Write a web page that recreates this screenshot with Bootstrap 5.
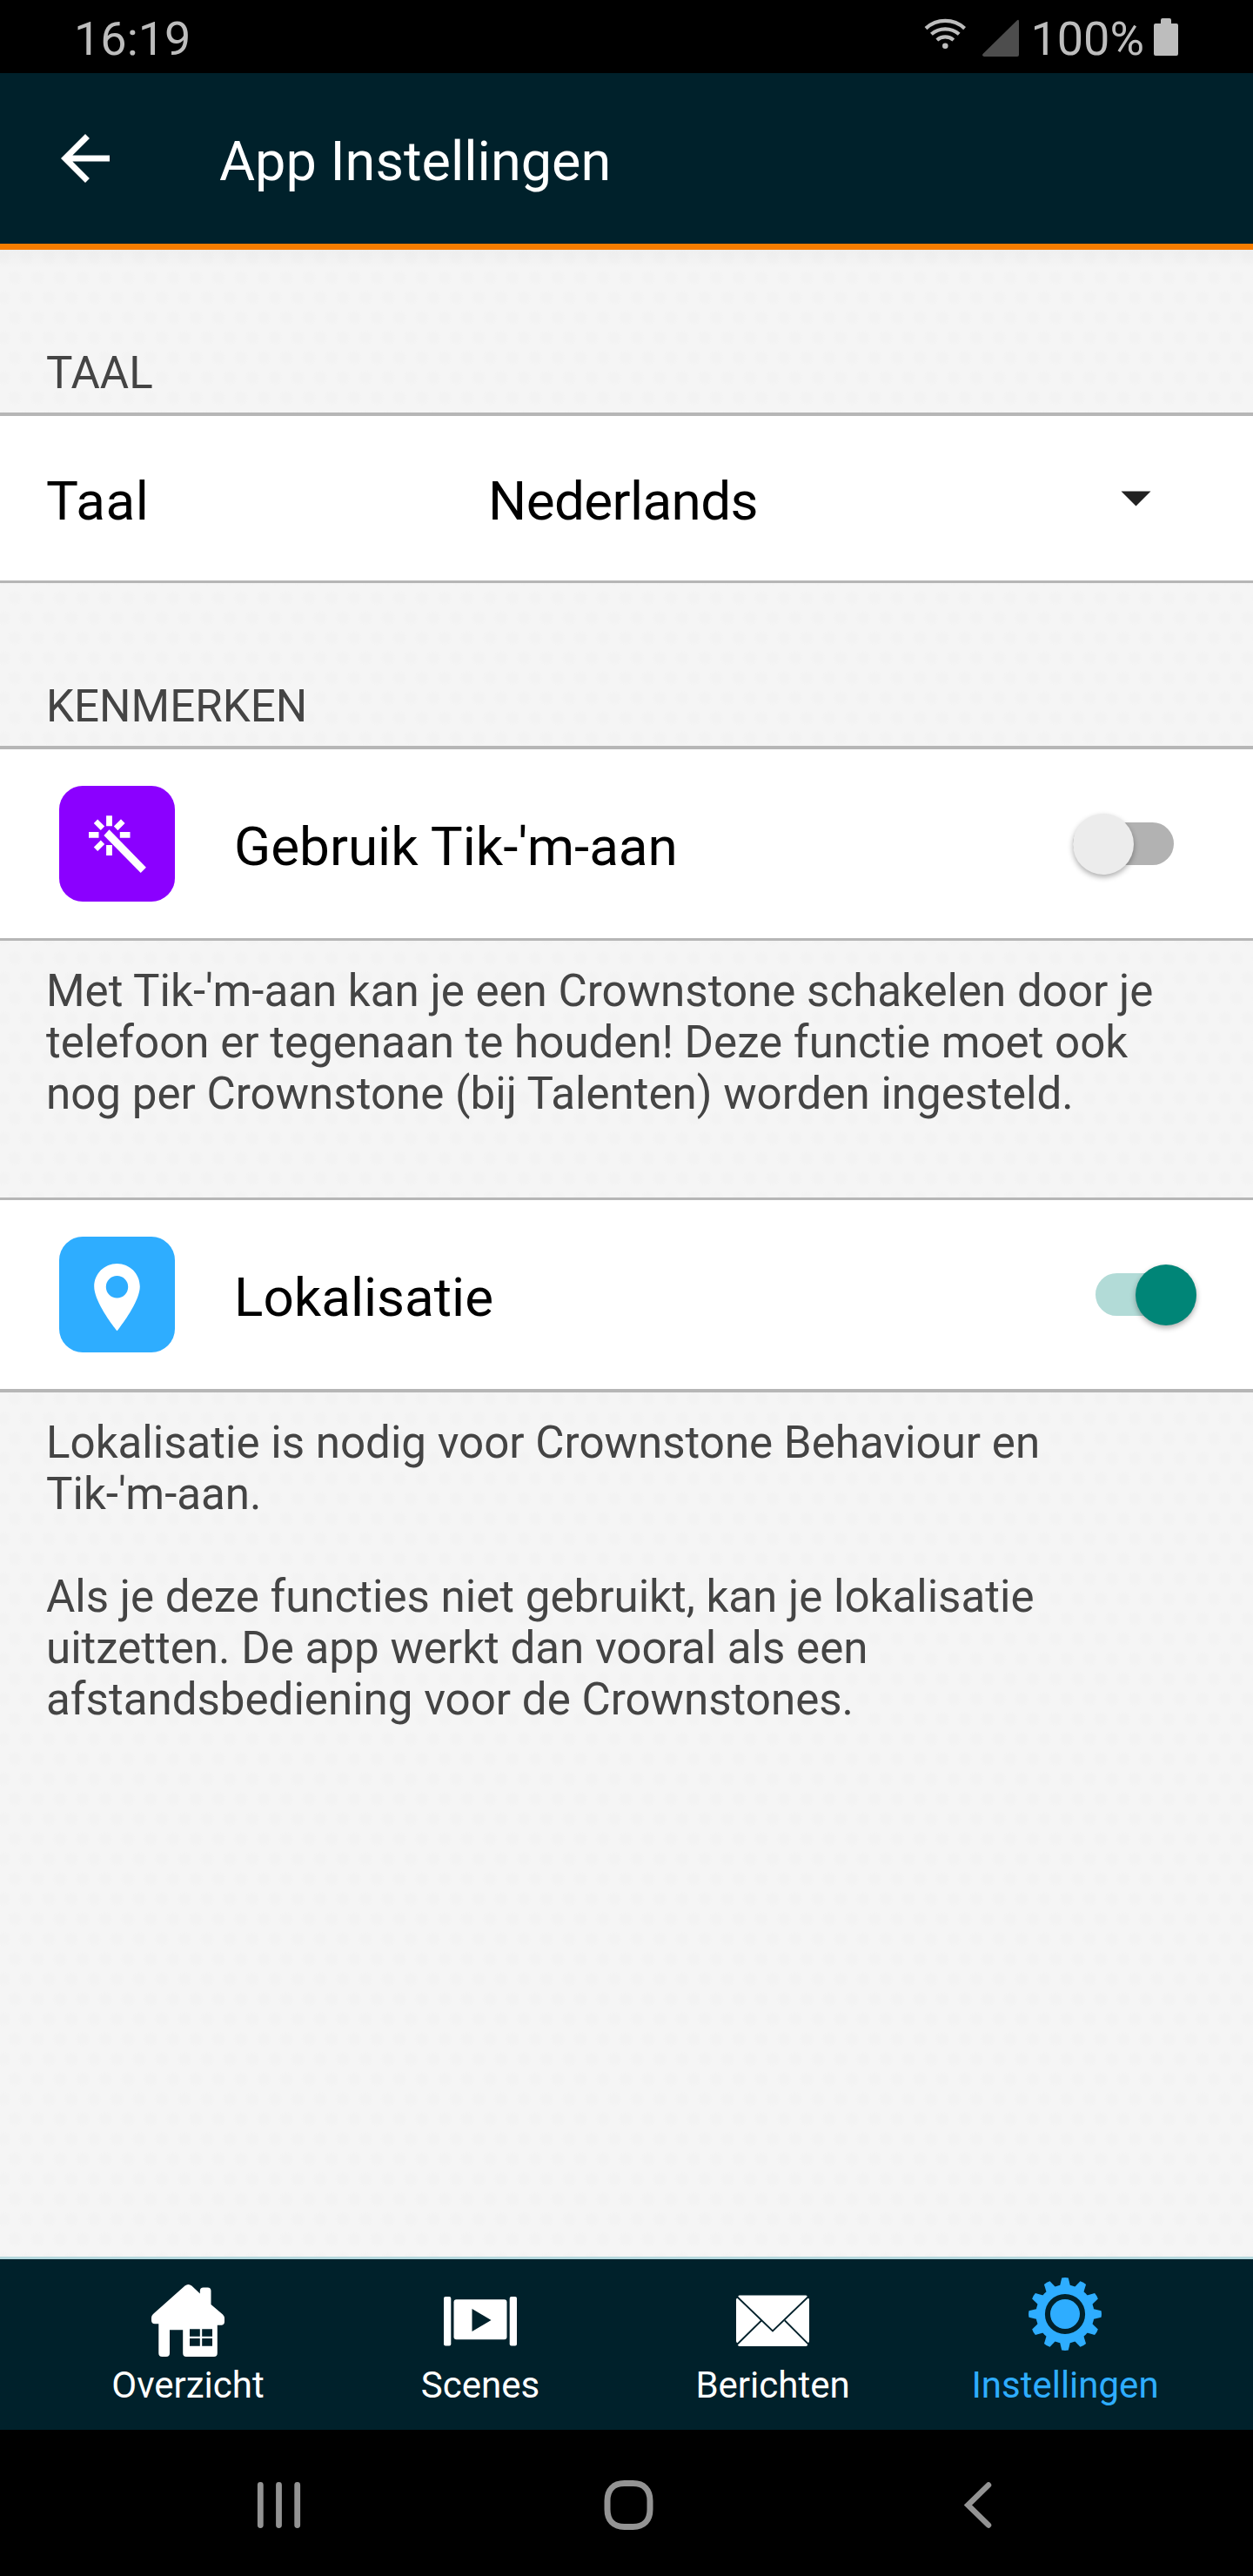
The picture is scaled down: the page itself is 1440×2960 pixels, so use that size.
<!DOCTYPE html>
<html lang="nl">
<head>
<meta charset="utf-8">
<meta name="viewport" content="width=device-width, initial-scale=1">
<title>App Instellingen</title>
<link href="https://cdn.jsdelivr.net/npm/bootstrap@5.3.0/dist/css/bootstrap.min.css" rel="stylesheet">
<style>
body{width:1440px;height:2960px;margin:0;overflow:hidden;font-family:Roboto,"Noto Sans",sans-serif;color:#000;background:#000}
svg{display:block;flex:none}
.statusbar{height:84px;padding:0 86px 0 85px;color:#bdbdbd;font-size:54px;line-height:64px}
.status-text{padding-top:5px}
.percent{margin:0 11px 0 13.4px}
.appbar{height:203px;background:#00212b;border-bottom:7px solid #f77d00;padding-left:56px}
.appbar-title{font-size:63px;line-height:74px;color:#fff;padding-top:7px;margin-left:112px}
.content{background-color:#f5f5f5;
 background-image:linear-gradient(rgba(0,0,0,.025),rgba(0,0,0,0) 22px),
 radial-gradient(circle,#f3f3f3 5px,#f4f4f4 7px,rgba(245,245,245,0) 9px),radial-gradient(circle,#f3f3f3 5px,#f4f4f4 7px,rgba(245,245,245,0) 9px);
 background-size:100% 100%,26px 46px,26px 46px;background-position:0 0,4px 9px,17px 32px;background-repeat:no-repeat,repeat,repeat}
.section-title{font-size:51.1px;line-height:59px;color:#444;padding:112px 53px 16px}
.setting{background:#fff;border-top:4px solid #b6b6b6;border-bottom:3px solid #b6b6b6;height:224px}
.setting-lang{height:196px;padding:0 117.5px 0 53px}
.setting-loc{border-top-width:3px;border-bottom-width:4px}
.setting-text{font-size:62px;line-height:74px;padding-top:6px}
.lang-label{width:508px;letter-spacing:.6px}
.lang-value{letter-spacing:-.6px}
.tile{width:133px;height:133px;border-radius:27px;margin-left:68px;margin-right:68px}
.tile-purple{background:#8b00ff}
.tile-blue{background:#2eadff}
.explain{font-size:51.1px;line-height:59px;color:#444;padding:28px 90px 90px 53px;margin:0}
.toggle{width:116px;height:70px;position:relative}
.toggle-off{margin-right:91px}
.toggle-on{margin-right:65px}
.track{position:absolute;inset:10px 0 11px 0;border-radius:25px;background:#b2b2b2}
.toggle-on .track{background:#b2dbd7}
.thumb{position:absolute;top:0;left:0;width:70px;height:70px;border-radius:50%;background:#ececec;box-shadow:0 3px 6px rgba(0,0,0,.32)}
.toggle-on .thumb{left:auto;right:0;background:#008577}
.tabbar{height:199px;background:#00212b;border-top:3px solid #b5d9de;padding:0 48px}
.tab{width:336px;color:#fff;font-size:42px;line-height:50px}
.tab-icon{height:119.5px;padding-top:22.5px}
.tab-active{color:#2eadff}
.tab-active .tab-icon{padding-top:6px}
.sysnav{height:168px;padding:56px 300px 0 295px}
.home-key{margin-right:9.4px}
</style>
<script src="https://cdn.jsdelivr.net/npm/bootstrap@5.3.0/dist/js/bootstrap.bundle.min.js"></script>
</head>
<body class="d-flex flex-column">
<div class="statusbar d-flex flex-shrink-0 justify-content-between align-items-center">
  <span class="status-text">16:19</span>
  <div class="d-flex align-items-center">
    <svg width="48" height="84" viewBox="1062 0 48 84" fill="none" stroke="#bdbdbd" stroke-width="4.2"><path d="M1064 32.600a33 33 0 0 1 44.600 0M1070.400 39.300a24 24 0 0 1 31.800 0M1076.800 46a14.500 14.500 0 0 1 19 0"/><circle cx="1086.300" cy="52.700" r="3.300" fill="#bdbdbd" stroke="none"/></svg>
    <svg class="ms-3" width="45" height="84" viewBox="1126 0 45 84"><path d="M1131 65h38q2 0 2-2V25q0-3.500-2.500-1.300L1129.500 62q-1.500 2 1.500 3z" fill="#4d4d4d"/></svg>
    <span class="status-text percent">100%</span>
    <svg width="28" height="84" viewBox="0 0 28 84"><path d="M8 27v-4q0-2 2-2h8q2 0 2 2v4h6q2 0 2 2v33q0 2-2 2H2q-2 0-2-2V29q0-2 2-2z" fill="#bdbdbd"/></svg>
  </div>
</div>

<header class="appbar d-flex flex-shrink-0 align-items-center">
  <svg width="84" height="84" viewBox="0 0 24 24" fill="#fff"><path d="M20 11H7.830l5.590-5.590L12 4l-8 8 8 8 1.410-1.410L7.830 13H20z"/></svg>
  <div class="appbar-title">App Instellingen</div>
</header>

<main class="content flex-grow-1">
  <div class="section-title">TAAL</div>
  <div class="setting setting-lang d-flex align-items-center">
    <div class="setting-text lang-label">Taal</div>
    <div class="setting-text lang-value flex-grow-1">Nederlands</div>
    <svg width="35" height="18" viewBox="0 0 35 18"><path d="M.5.500h34L17.500 17.500z" fill="#212121"/></svg>
  </div>

  <div class="section-title">KENMERKEN</div>
  <div class="setting d-flex align-items-center">
    <div class="tile tile-purple">
      <svg width="133" height="133" viewBox="0 0 133 133" fill="#fff">
        <path d="M57.500 50.300 51.400 57 93.700 100l6.200-6.300z"/>
        <path d="M54.100 34.200h6.800v12h-6.800zM54.100 68h6.800v12h-6.800zM34 53h11.500v6.800H34zM69.800 53h11.700v6.800H69.800zM39.800 43l4.400-4.400 8 8-4.400 4.400zM71 38.600l4.400 4.400-8 8-4.400-4.400z" transform="translate(0 0)"/>
        <path d="M39.800 70.600l8-8 4.400 4.400-8 8zM71 38.600l-8 8 4.400 4.400 8-8z"/>
      </svg>
    </div>
    <div class="setting-text flex-grow-1">Gebruik Tik-'m-aan</div>
    <div class="toggle toggle-off"><div class="track"></div><div class="thumb"></div></div>
  </div>
  <p class="explain">Met Tik-'m-aan kan je een Crownstone schakelen door je<br>telefoon er tegenaan te houden! Deze functie moet ook<br>nog per Crownstone (bij Talenten) worden ingesteld.</p>

  <div class="setting setting-loc d-flex align-items-center">
    <div class="tile tile-blue">
      <svg width="133" height="133" viewBox="0 0 133 133"><path fill="#fff" fill-rule="evenodd" d="M66.500 31C52 31 40.200 42.600 40.200 57.200 40.200 76 66.500 108.300 66.500 108.300S92.800 76 92.800 57.200C92.800 42.600 81 31 66.500 31zm0 14a12.700 12.700 0 1 1 0 25.400 12.700 12.700 0 0 1 0-25.400z"/></svg>
    </div>
    <div class="setting-text flex-grow-1">Lokalisatie</div>
    <div class="toggle toggle-on"><div class="track"></div><div class="thumb"></div></div>
  </div>
  <p class="explain">Lokalisatie is nodig voor Crownstone Behaviour en<br>Tik-'m-aan.<br><br>Als je deze functies niet gebruikt, kan je lokalisatie<br>uitzetten. De app werkt dan vooral als een<br>afstandsbediening voor de Crownstones.</p>
</main>

<nav class="tabbar d-flex flex-shrink-0">
  <div class="tab d-flex flex-column align-items-center">
    <div class="tab-icon d-flex align-items-center">
      <svg width="84" height="84" viewBox="0 0 84 84"><path fill="#fff" fill-rule="evenodd" d="M38.500 1.600Q42.400-1.400 46.300 1.600L55.800 10.500V7.500q0-4 4-4h4.700q4 0 4 4V23L82 34.500q2 2 2 4.500v4q0 3.700-4 3.700h-4.200V79q0 4-4 4H40q-3.800 0-3.800-4V52.300H21V79q0 4-4 4h-4.700q-4 0-4-4V45.300H4q-4 0-4-4V38q0-2 2-4zM44 51.300v8.400h11.800v-8.400zm14.200 0v8.400H70v-8.400zM44 62v8.700h11.800V62zm14.200 0v8.700H70V62z"/></svg>
    </div>
    <span>Overzicht</span>
  </div>
  <div class="tab d-flex flex-column align-items-center">
    <div class="tab-icon d-flex align-items-center">
      <svg width="84" height="57" viewBox="0 0 84 57"><g fill="#fff"><rect width="8.300" height="56.500" rx="2"/><rect x="75.700" width="8.300" height="56.500" rx="2"/><rect x="11.500" y="3.200" width="61" height="46" rx="3"/></g><path d="M32.500 14v26l22-13z" fill="#00212b"/></svg>
    </div>
    <span>Scenes</span>
  </div>
  <div class="tab d-flex flex-column align-items-center">
    <div class="tab-icon d-flex align-items-center">
      <svg width="84" height="60" viewBox="0 0 84 60"><path d="M4 .500h76q2 0 2 3 2 0 2 2V53q0 2-1.500 2 0 4-2.500 4H4q-2.500 0-2.500-4Q0 55 0 53V5.500q0-2 2-2 0-3 2-3z" fill="#fff"/><path d="M1 2l41 39.500L83 2M29 29.500 1 57M56 29.500 83.500 57" fill="none" stroke="#00212b" stroke-width="1.800"/></svg>
    </div>
    <span>Berichten</span>
  </div>
  <div class="tab tab-active d-flex flex-column align-items-center">
    <div class="tab-icon d-flex align-items-center">
      <svg width="84" height="84" viewBox="-42 -42 84 84" fill="#2eadff">
        <defs><path id="cog" d="M-6.500-30-3.800-41.500Q0-42.400 3.800-41.500L6.500-30z"/></defs>
        <circle r="28.300" fill="none" stroke="#2eadff" stroke-width="10.400"/><circle r="17"/>
        <use href="#cog"/><use href="#cog" transform="rotate(30)"/><use href="#cog" transform="rotate(60)"/><use href="#cog" transform="rotate(90)"/><use href="#cog" transform="rotate(120)"/><use href="#cog" transform="rotate(150)"/><use href="#cog" transform="rotate(180)"/><use href="#cog" transform="rotate(210)"/><use href="#cog" transform="rotate(240)"/><use href="#cog" transform="rotate(270)"/><use href="#cog" transform="rotate(300)"/><use href="#cog" transform="rotate(330)"/>
      </svg>
    </div>
    <span>Instellingen</span>
  </div>
</nav>

<div class="sysnav d-flex flex-shrink-0 justify-content-between align-items-start">
  <svg width="51" height="60" viewBox="0 0 51 60" stroke="#939393" stroke-width="6.800" stroke-linecap="round"><path d="M4.300 7.400v46.200M25.500 7.400v46.200M46.700 7.400v46.200"/></svg>
  <svg class="home-key" width="57" height="60" viewBox="0 0 57 60" fill="none" stroke="#939393" stroke-width="7"><path d="M28.500 5.500h5C46 5.500 53 13 53 25.500v10C53 48 46 55.500 33.500 55.500h-10C11 55.500 4 48 4 35.500v-10C4 13 11 5.500 23.500 5.500z"/></svg>
  <svg width="32" height="60" viewBox="0 0 32 60" fill="none" stroke="#939393" stroke-width="6.500" stroke-linecap="round"><path d="M28 7.500 4.500 30.500 28 53.500"/></svg>
</div>
</body>
</html>
